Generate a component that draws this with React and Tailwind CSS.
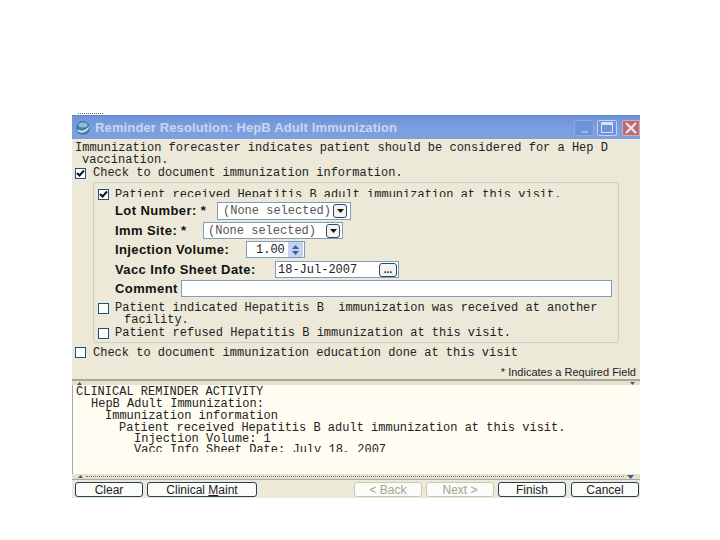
const mono = "font-['Liberation_Mono',monospace] text-[12px] leading-[12px] text-[#222] whitespace-pre";
const label = "font-['Liberation_Sans',sans-serif] font-bold text-[13px] leading-[18px] text-[#111] tracking-[0.4px] whitespace-pre";
const field = "flex items-center bg-white border border-[#7f9db9] h-full";

const Check = ({ checked }) => (
  <span className="flex items-center justify-center w-[11px] h-[11px] bg-white border border-[#1c5180] shrink-0">
    {checked && (
      <svg width="9" height="9" viewBox="0 0 9 9">
        <path d="M1 4 L3.5 6.5 L8 1.5" fill="none" stroke="#111" strokeWidth="2" />
      </svg>
    )}
  </span>
);

const DropButton = () => (
  <span className="flex items-center justify-center w-[14px] h-[14px] rounded-[3px] border border-[#2a4a6a] bg-[#f4f3ee] shrink-0">
    <svg width="7" height="4" viewBox="0 0 7 4">
      <path d="M0 0 H7 L3.5 4 Z" fill="#111" />
    </svg>
  </span>
);

const Clipped = ({ h, className, children }) => (
  <div className={`overflow-hidden ${className || ""}`} style={{ height: h }}>
    <div className={mono}>{children}</div>
  </div>
);

const WinButton = ({ className, children }) => (
  <span className={`flex items-center justify-center h-[16px] rounded-[2px] border border-[#8fa9dc] ${className}`}>
    {children}
  </span>
);

const ActionButton = ({ width, disabled, children }) => (
  <button
    style={{ width }}
    className={`h-[15px] flex items-center justify-center rounded-[3px] border bg-[#fbfbf8] font-['Liberation_Sans',sans-serif] text-[12px] leading-none ${
      disabled ? "border-[#c9c7ba] text-[#a5a294]" : "border-[#1f3f63] text-[#222]"
    }`}
  >
    {children}
  </button>
);

const App = () => {
  return (
    <div className="w-[720px] h-[540px] bg-white pt-[113px] pl-[72px] overflow-hidden">
      <div className="ml-[6px] w-[25px] h-[2px] border-t border-dotted border-[#666]" />

      <div className="w-[568px] bg-[#ece9d8]">
        {/* title bar */}
        <div className="h-[24px] flex items-center bg-gradient-to-b from-[#6f92d6] via-[#7b9ee0] to-[#7f9fdd] border-t border-[#5f83c8]">
          <svg className="ml-[3px]" width="16" height="16" viewBox="0 0 16 16">
            <circle cx="8" cy="8" r="7" fill="#3f7fae" />
            <path d="M1.5 9 C5 12 11 11 14.5 6 C13 13 4 15 1.5 9 Z" fill="#e8f0f4" />
            <ellipse cx="8" cy="5" rx="4.5" ry="2.5" fill="#8cc0d8" />
          </svg>
          <span className="ml-[4px] font-['Liberation_Sans',sans-serif] font-bold text-[13px] text-[#c9d6ef] tracking-[0.13px] whitespace-pre">
            Reminder Resolution: HepB Adult Immunization
          </span>
          <div className="ml-auto flex items-center gap-[3px]">
            <WinButton className="w-[20px] bg-[#6f93da] items-end pb-[2px]">
              <span className="w-[7px] h-[2px] bg-[#9db6e6]" />
            </WinButton>
            <WinButton className="w-[20px] bg-[#6f93da] border-[#c4d3f0]">
              <span className="w-[12px] h-[11px] border border-t-[3px] border-[#d8e3f6]" />
            </WinButton>
            <WinButton className="ml-[2px] w-[18px] bg-[#b66d78] border-[#d9a9b0] rounded-r-none">
              <svg width="12" height="12" viewBox="0 0 12 12">
                <path d="M1 1 L11 11 M11 1 L1 11" stroke="#f0e4e4" strokeWidth="2.2" />
              </svg>
            </WinButton>
          </div>
        </div>

        {/* reminder form */}
        <div className="pt-[3px] pl-[3px]">
          <div className={mono}>Immunization forecaster indicates patient should be considered for a Hep D</div>
          <div className={`${mono} pl-[7px]`}>vaccination.</div>
          <div className="flex items-center gap-[7px] h-[14px]">
            <Check checked />
            <div className={mono}>Check to document immunization information.</div>
          </div>

          <div className="mt-[2px] ml-[18px] w-[526px] h-[161px] border border-[#cfccba] rounded-[3px] pl-[4px] pt-[4px]">
            <div className="h-[15px] flex items-center gap-[6px]">
              <Check checked />
              <Clipped h={8} className="mb-[4px]">Patient received Hepatitis B adult immunization at this visit.</Clipped>
            </div>

            <div className="ml-[17px] h-[18px] flex items-center">
              <span className={`${label} w-[102px]`}>Lot Number: *</span>
              <div className={`${field} w-[134px] pl-[5px] pr-[3px] justify-between`}>
                <div className={`${mono} text-[#555]`}>(None selected)</div>
                <DropButton />
              </div>
            </div>
            <div className="ml-[17px] mt-[2px] h-[17px] flex items-center">
              <span className={`${label} w-[88px]`}>Imm Site: *</span>
              <div className={`${field} w-[140px] pl-[4px] pr-[2px] justify-between`}>
                <div className={`${mono} text-[#555]`}>(None selected)</div>
                <DropButton />
              </div>
            </div>
            <div className="ml-[17px] mt-[2px] h-[17px] flex items-center">
              <span className={`${label} w-[131px]`}>Injection Volume:</span>
              <div className={`${field} w-[59px] pl-[9px] pr-[1px] justify-between`}>
                <div className={mono}>1.00</div>
                <span className="flex flex-col items-center justify-center gap-[2px] w-[15px] h-[15px] bg-[#c3d4f2]">
                  <svg width="7" height="4" viewBox="0 0 7 4"><path d="M3.5 0 L7 4 H0 Z" fill="#3f5f8f" /></svg>
                  <svg width="7" height="4" viewBox="0 0 7 4"><path d="M0 0 H7 L3.5 4 Z" fill="#3f5f8f" /></svg>
                </span>
              </div>
            </div>
            <div className="ml-[17px] mt-[3px] h-[17px] flex items-center">
              <span className={`${label} w-[160px]`}>Vacc Info Sheet Date:</span>
              <div className={`${field} w-[124px] pl-[2px] pr-[1px] justify-between`}>
                <div className={mono}>18-Jul-2007</div>
                <span className="flex items-center justify-center w-[18px] h-[14px] rounded-[3px] border border-[#2a4a6a] bg-[#f4f3ee] font-['Liberation_Sans',sans-serif] font-bold text-[10px] leading-none text-[#222]">
                  ...
                </span>
              </div>
            </div>
            <div className="ml-[17px] mt-[2px] h-[17px] flex items-center">
              <span className={`${label} w-[66px]`}>Comment</span>
              <div className={`${field} w-[431px]`} />
            </div>

            <div className="mt-[5px] h-[12px] flex items-center gap-[6px]">
              <Check />
              <div className={mono}>Patient indicated Hepatitis B  immunization was received at another</div>
            </div>
            <div className={`${mono} pl-[26px]`}>facility.</div>
            <div className="mt-[1px] h-[12px] flex items-center gap-[6px]">
              <Check />
              <div className={mono}>Patient refused Hepatitis B immunization at this visit.</div>
            </div>
          </div>

          <div className="mt-[3px] h-[12px] flex items-center gap-[7px]">
            <Check />
            <Clipped h={9} className="mb-[2px]">Check to document immunization education done at this visit</Clipped>
          </div>
        </div>

        <div className="mt-[8px] pr-[4px] h-[12px] text-right font-['Liberation_Sans',sans-serif] text-[11px] leading-[12px] text-[#222]">
          * Indicates a Required Field
        </div>

        {/* top edge of the activity memo */}
        <div className="mt-[1px] h-[6px] flex items-center justify-between px-[5px] bg-[#e4e1cf] border-t-2 border-[#a9a797]">
          <svg width="5" height="3" viewBox="0 0 5 3"><path d="M2.5 0 L5 3 H0 Z" fill="#555" /></svg>
          <svg width="5" height="3" viewBox="0 0 5 3"><path d="M0 0 H5 L2.5 3 Z" fill="#555" /></svg>
        </div>

        {/* activity memo */}
        <div className="h-[89px] bg-[#fffcf2] overflow-hidden pl-[3px] pt-[1px] border-l border-[#a9a797]">
          <div className={mono}>CLINICAL REMINDER ACTIVITY</div>
          <div className={`${mono} pl-[15px]`}>HepB Adult Immunization:</div>
          <div className={`${mono} pl-[29px]`}>Immunization information</div>
          <div className={`${mono} pl-[43px]`}>Patient received Hepatitis B adult immunization at this visit.</div>
          <div className={`${mono} pl-[58px] mt-[-1px]`}>Injection Volume: 1</div>
          <div className="mt-[-1px]">
            <Clipped h={8}>
              <span className="pl-[58px]">Vacc Info Sheet Date: July 18, 2007</span>
            </Clipped>
          </div>
        </div>

        {/* bottom scrollbar */}
        <div className="h-[6px] flex items-center gap-[3px] px-[6px] bg-[#e4e1cf] border-b border-[#a9a797]">
          <svg width="5" height="3" viewBox="0 0 5 3"><path d="M2.5 0 L5 3 H0 Z" fill="#555" /></svg>
          <span className="flex-1 border-t border-dotted border-[#777]" />
          <svg width="7" height="4" viewBox="0 0 7 4"><path d="M0 0 H7 L3.5 4 Z" fill="#3f5f8f" /></svg>
        </div>

        {/* buttons */}
        <div className="h-[18px] flex items-end pl-[3px] pb-[1px]">
          <ActionButton width={68}>Clear</ActionButton>
          <span className="ml-[4px]">
            <ActionButton width={110}>
              <span>Clinical <span className="underline">M</span>aint</span>
            </ActionButton>
          </span>
          <span className="ml-[97px]">
            <ActionButton width={68} disabled>&lt; Back</ActionButton>
          </span>
          <span className="ml-[4px]">
            <ActionButton width={68} disabled>Next &gt;</ActionButton>
          </span>
          <span className="ml-[4px]">
            <ActionButton width={68}>Finish</ActionButton>
          </span>
          <span className="ml-[5px]">
            <ActionButton width={68}>Cancel</ActionButton>
          </span>
        </div>
      </div>
    </div>
  );
};

export default App;
